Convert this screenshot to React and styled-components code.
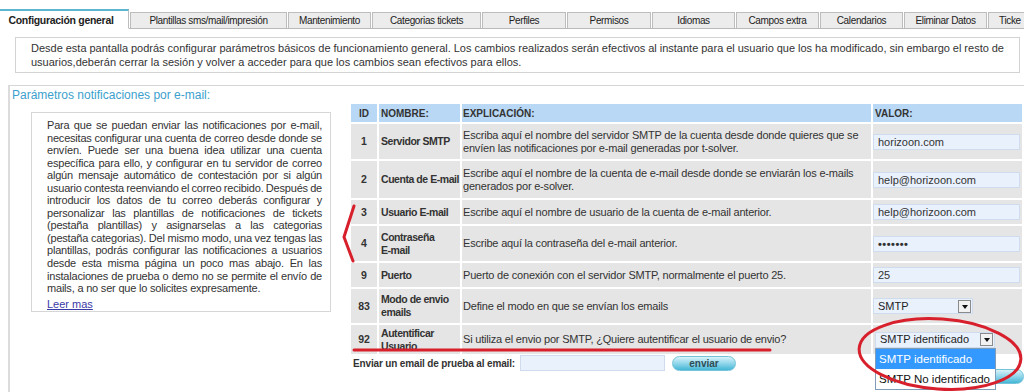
import React from 'react';
import styled, { createGlobalStyle } from 'styled-components';

const GlobalStyle = createGlobalStyle`
  body {
    margin: 0;
    background: #fff;
    font-family: "Liberation Sans", Arial, sans-serif;
    color: #333;
  }
`;

const Page = styled.div`
  position: relative;
  width: 1024px;
  height: 392px;
  overflow: hidden;
`;

const TabBar = styled.div`
  display: flex;
  align-items: flex-end;
  height: 19px;
  padding-top: 9px;
  border-bottom: 1px solid #b9b9b9;
`;

const Tab = styled.div`
  flex: none;
  box-sizing: border-box;
  width: ${(p) => p.$w}px;
  height: ${(p) => (p.$active ? 20 : 16)}px;
  margin-left: ${(p) => (p.$active ? 0 : 1)}px;
  margin-bottom: ${(p) => (p.$active ? -1 : 0)}px;
  padding-right: ${(p) => (p.$active ? 6 : 0)}px;
  display: flex;
  align-items: center;
  justify-content: ${(p) => (p.$cut ? 'flex-start' : 'center')};
  padding-left: ${(p) => (p.$cut ? 10 : 0)}px;
  font-size: ${(p) => (p.$active ? 10.5 : 10)}px;
  letter-spacing: ${(p) => (p.$active ? -0.3 : -0.35)}px;
  white-space: nowrap;
  overflow: hidden;
  color: #222;
  font-weight: ${(p) => (p.$active ? 'bold' : 'normal')};
  background: ${(p) => (p.$active ? '#fff' : '#ececec')};
  border: 1px solid #bdbdbd;
  border-top: ${(p) => (p.$active ? '2px solid #5db6cf' : '1px solid #bdbdbd')};
  border-left: ${(p) => (p.$active ? 'none' : '1px solid #bdbdbd')};
  border-bottom: ${(p) => (p.$active ? '1px solid #fff' : 'none')};
`;

const Intro = styled.div`
  box-sizing: border-box;
  height: 36px;
  margin: 8px 4px 0 15px;
  padding: 3px 15px 0;
  border: 1px solid #d3d3d3;
  font-size: 11px;
  line-height: 14px;
`;

const Line = styled.div`
  white-space: nowrap;
  text-align: ${(p) => (p.$justify ? 'justify' : 'left')};
  text-align-last: ${(p) => (p.$justify ? 'justify' : 'left')};
  word-spacing: ${(p) => (p.$justify ? '-1.5px' : '0')};
`;

const Panel = styled.div`
  margin: 12px 0 0 8px;
  border-top: 1px solid #d6d6d6;
  border-left: 2px solid #dcdcdc;
  height: 400px;
`;

const PanelTitle = styled.div`
  height: 18px;
  line-height: 18px;
  padding-left: 2px;
  font-size: 12px;
  color: #3c9fcd;
`;

const PanelBody = styled.div`
  display: flex;
  align-items: flex-start;
  padding-left: 21px;
`;

const HelpBox = styled.div`
  box-sizing: border-box;
  width: 300px;
  height: 200px;
  margin-top: 8px;
  padding: 6px 8px 0 15px;
  border: 1px solid #d6d6d6;
  font-size: 11px;
  line-height: 12.55px;
  letter-spacing: -0.2px;
`;

const ReadMore = styled.a`
  display: block;
  margin-top: 2px;
  line-height: 14px;
  letter-spacing: 0;
  color: #3a3aa6;
  text-decoration: underline;
`;

const Main = styled.div`
  margin: -2px 0 0 18px;
`;

const Table = styled.table`
  width: 675px;
  table-layout: fixed;
  border-collapse: separate;
  border-spacing: 2px;
  font-size: 11px;
`;

const Col = styled.col`
  width: ${(p) => p.$w}px;
`;

const HeadCell = styled.th`
  box-sizing: border-box;
  height: 18px;
  padding: 0 0 0 ${(p) => p.$pad ?? 2}px;
  background: #b8d8f6;
  font-size: 10px;
  font-weight: bold;
  text-align: ${(p) => p.$align || 'left'};
  color: #333;
`;

const Cell = styled.td`
  box-sizing: border-box;
  height: ${(p) => p.$h}px;
  padding: 0 0 0 ${(p) => p.$pad ?? 2}px;
  background: #e5e5e5;
  vertical-align: middle;
  text-align: ${(p) => p.$align || 'left'};
  white-space: nowrap;
  font-size: ${(p) => (p.$bold ? 10.5 : 11)}px;
  font-weight: ${(p) => (p.$bold ? 'bold' : 'normal')};
  letter-spacing: ${(p) => p.$ls || 0}px;
  line-height: 13px;
  color: #333;
`;

const Input = styled.div`
  box-sizing: border-box;
  width: ${(p) => p.$w || 147}px;
  height: 16px;
  padding-left: 4px;
  background: #e9f1fd;
  border: 1px solid #cfdcee;
  font-size: 11px;
  line-height: 14px;
  font-weight: ${(p) => (p.$dots ? 'bold' : 'normal')};
  letter-spacing: ${(p) => (p.$dots ? '0.5px' : '0')};
  color: #333;
`;

const Select = styled.div`
  position: relative;
  box-sizing: border-box;
  display: flex;
  align-items: center;
  justify-content: space-between;
  width: ${(p) => p.$w}px;
  height: 16px;
  margin-left: ${(p) => p.$offset || 0}px;
  padding: 0 1px 0 4px;
  background: #e9f1fd;
  border: 1px solid #cfdcee;
  font-size: 11px;
  color: #222;
`;

const Arrow = styled.span`
  box-sizing: border-box;
  width: 13px;
  height: 13px;
  display: flex;
  align-items: center;
  justify-content: center;
  background: #f2f2f2;
  border: 1px solid #8a8a8a;

  &::after {
    content: '';
    border-left: 3px solid transparent;
    border-right: 3px solid transparent;
    border-top: 4px solid #111;
    margin-top: 1px;
  }
`;

const DropList = styled.div`
  position: absolute;
  top: 15px;
  left: -1px;
  z-index: 5;
  width: 119px;
  background: #fff;
  border: 1px solid #7f9db9;
  font-size: 11.5px;
`;

const Option = styled.div`
  height: 20px;
  line-height: 20px;
  padding-left: 3px;
  background: ${(p) => (p.$selected ? '#3399ff' : '#fff')};
  color: ${(p) => (p.$selected ? '#fff' : '#111')};
`;

const TestRow = styled.div`
  display: flex;
  align-items: center;
  height: 16px;
  margin: -1px 0 0 4px;
  font-size: 10px;
  letter-spacing: -0.15px;
  font-weight: bold;
  color: #333;
`;

const TestInput = styled.div`
  box-sizing: border-box;
  width: 145px;
  height: 16px;
  margin-left: 5px;
  background: #e9f1fd;
  border: 1px solid #cfdcee;
`;

const Pill = styled.button`
  display: block;
  width: ${(p) => p.$w}px;
  height: 15px;
  margin-left: ${(p) => p.$ml || 0}px;
  padding: 0;
  border: 1px solid #74c3d9;
  border-radius: 8px;
  background: linear-gradient(#d8f3fa, #8fd6ea 50%, #45b6d6);
  font-family: "Liberation Sans", Arial, sans-serif;
  font-size: 10px;
  font-weight: bold;
  color: #2e4d57;
`;

const SaveRow = styled.div`
  display: flex;
  justify-content: flex-end;
  height: 15px;
  margin-top: -2px;
`;

const Marks = styled.svg`
  position: absolute;
  left: 0;
  top: 0;
  z-index: 10;
  pointer-events: none;
`;

const tabs = [
  ['Plantillas sms/mail/impresión', 157],
  ['Mantenimiento', 83],
  ['Categorias tickets', 109],
  ['Perfiles', 84],
  ['Permisos', 84],
  ['Idiomas', 83],
  ['Campos extra', 83],
  ['Calendarios', 83],
  ['Eliminar Datos', 83],
];

const helpLines = [
  'Para que se puedan enviar las notificaciones por e-mail,',
  'necesitas configurar una cuenta de correo desde donde se',
  'envíen. Puede ser una buena idea utilizar una cuenta',
  'específica para ello, y configurar en tu servidor de correo',
  'algún mensaje automático de contestación por si algún',
  'usuario contesta reenviando el correo recibido. Después de',
  'introducir los datos de tu correo deberás configurar y',
  'personalizar las plantillas de notificaciones de tickets',
  '(pestaña plantillas) y asignarselas a las categorias',
  '(pestaña categorias). Del mismo modo, una vez tengas las',
  'plantillas, podrás configurar las notificaciones a usuarios',
  'desde esta misma página un poco mas abajo. En las',
  'instalaciones de prueba o demo no se permite el envío de',
  'mails, a no ser que lo solicites expresamente.',
];

const rows = [
  { id: '1', name: ['Servidor SMTP'], h: 35, text: ['Escriba aquí el nombre del servidor SMTP de la cuenta desde donde quieres que se', 'envíen las notificaciones por e-mail generadas por t-solver.'], value: 'horizoon.com' },
  { id: '2', name: ['Cuenta de E-mail'], h: 37, text: ['Escribe aquí el nombre de la cuenta de e-mail desde donde se enviarán los e-mails', 'generados por e-solver.'], value: 'help@horizoon.com' },
  { id: '3', name: ['Usuario E-mail'], h: 24, text: ['Escribe aquí el nombre de usuario de la cuenta de e-mail anterior.'], value: 'help@horizoon.com' },
  { id: '4', name: ['Contraseña', 'E-mail'], h: 35, text: ['Escribe aquí la contraseña del e-mail anterior.'], value: '•••••••', dots: true },
  { id: '9', name: ['Puerto'], h: 24, text: ['Puerto de conexión con el servidor SMTP, normalmente el puerto 25.'], value: '25' },
  { id: '83', name: ['Modo de envio', 'emails'], h: 34, text: ['Define el modo en que se envían los emails'], select: 'mode' },
  { id: '92', name: ['Autentificar', 'Usuario'], h: 29, text: ['Si utiliza el envio por SMTP, ¿Quiere autentificar el usuario de envio?'], select: 'auth' },
];

function Lines({ items }) {
  return items.map((t, i) => (
    <React.Fragment key={i}>
      {i > 0 && <br />}
      {t}
    </React.Fragment>
  ));
}

function ValueCell({ row }) {
  if (row.select === 'mode') {
    return (
      <Select $w={100}>
        SMTP
        <Arrow />
      </Select>
    );
  }
  if (row.select === 'auth') {
    return (
      <Select $w={120} $offset={2}>
        SMTP identificado
        <Arrow />
        <DropList>
          <Option $selected>SMTP identificado</Option>
          <Option>SMTP No identificado</Option>
        </DropList>
      </Select>
    );
  }
  return <Input $dots={row.dots}>{row.value}</Input>;
}

export default function App() {
  return (
    <Page>
      <GlobalStyle />
      <TabBar>
        <Tab $active $w={129}>Configuración general</Tab>
        {tabs.map(([label, w]) => (
          <Tab key={label} $w={w}>{label}</Tab>
        ))}
        <Tab $w={60} $cut>Ticke</Tab>
      </TabBar>

      <Intro>
        <Line $justify>
          Desde esta pantalla podrás configurar parámetros básicos de funcionamiento general. Los cambios realizados serán efectivos al instante para el usuario que los ha modificado, sin embargo el resto de
        </Line>
        <Line>usuarios,deberán cerrar la sesión y volver a acceder para que los cambios sean efectivos para ellos.</Line>
      </Intro>

      <Panel>
        <PanelTitle>Parámetros notificaciones por e-mail:</PanelTitle>
        <PanelBody>
          <HelpBox>
            {helpLines.map((t, i) => (
              <Line key={i} $justify={i < helpLines.length - 1}>{t}</Line>
            ))}
            <ReadMore href="#">Leer mas</ReadMore>
          </HelpBox>

          <Main>
            <Table>
              <colgroup>
                <Col $w={26} />
                <Col $w={81} />
                <Col $w={409} />
                <Col $w={149} />
              </colgroup>
              <thead>
                <tr>
                  <HeadCell $align="center" $pad={0}>ID</HeadCell>
                  <HeadCell>NOMBRE:</HeadCell>
                  <HeadCell $pad={1}>EXPLICACIÓN:</HeadCell>
                  <HeadCell>VALOR:</HeadCell>
                </tr>
              </thead>
              <tbody>
                {rows.map((row) => (
                  <tr key={row.id}>
                    <Cell $h={row.h} $align="center" $pad={0} $bold>{row.id}</Cell>
                    <Cell $h={row.h} $bold $ls={-0.45}>
                      <Lines items={row.name} />
                    </Cell>
                    <Cell $h={row.h} $pad={1} $ls={-0.2}>
                      <Lines items={row.text} />
                    </Cell>
                    <Cell $h={row.h} $pad={0}>
                      <ValueCell row={row} />
                    </Cell>
                  </tr>
                ))}
              </tbody>
            </Table>
            <TestRow>
              Enviar un email de prueba al email:
              <TestInput />
              <Pill $w={64} $ml={7}>enviar</Pill>
            </TestRow>
            <SaveRow>
              <Pill $w={120} aria-label="guardar" />
            </SaveRow>
          </Main>
        </PanelBody>
      </Panel>

      <Marks width="1024" height="392" viewBox="0 0 1024 392">
        <g fill="none" stroke="#d7202c" strokeWidth="3" strokeLinecap="round" strokeLinejoin="round">
          <path d="M354 206 L344 237 L353 261" />
          <path d="M354 350 L770 350" />
          <ellipse cx="940" cy="354" rx="81" ry="35" transform="rotate(4 940 354)" />
        </g>
      </Marks>
    </Page>
  );
}
